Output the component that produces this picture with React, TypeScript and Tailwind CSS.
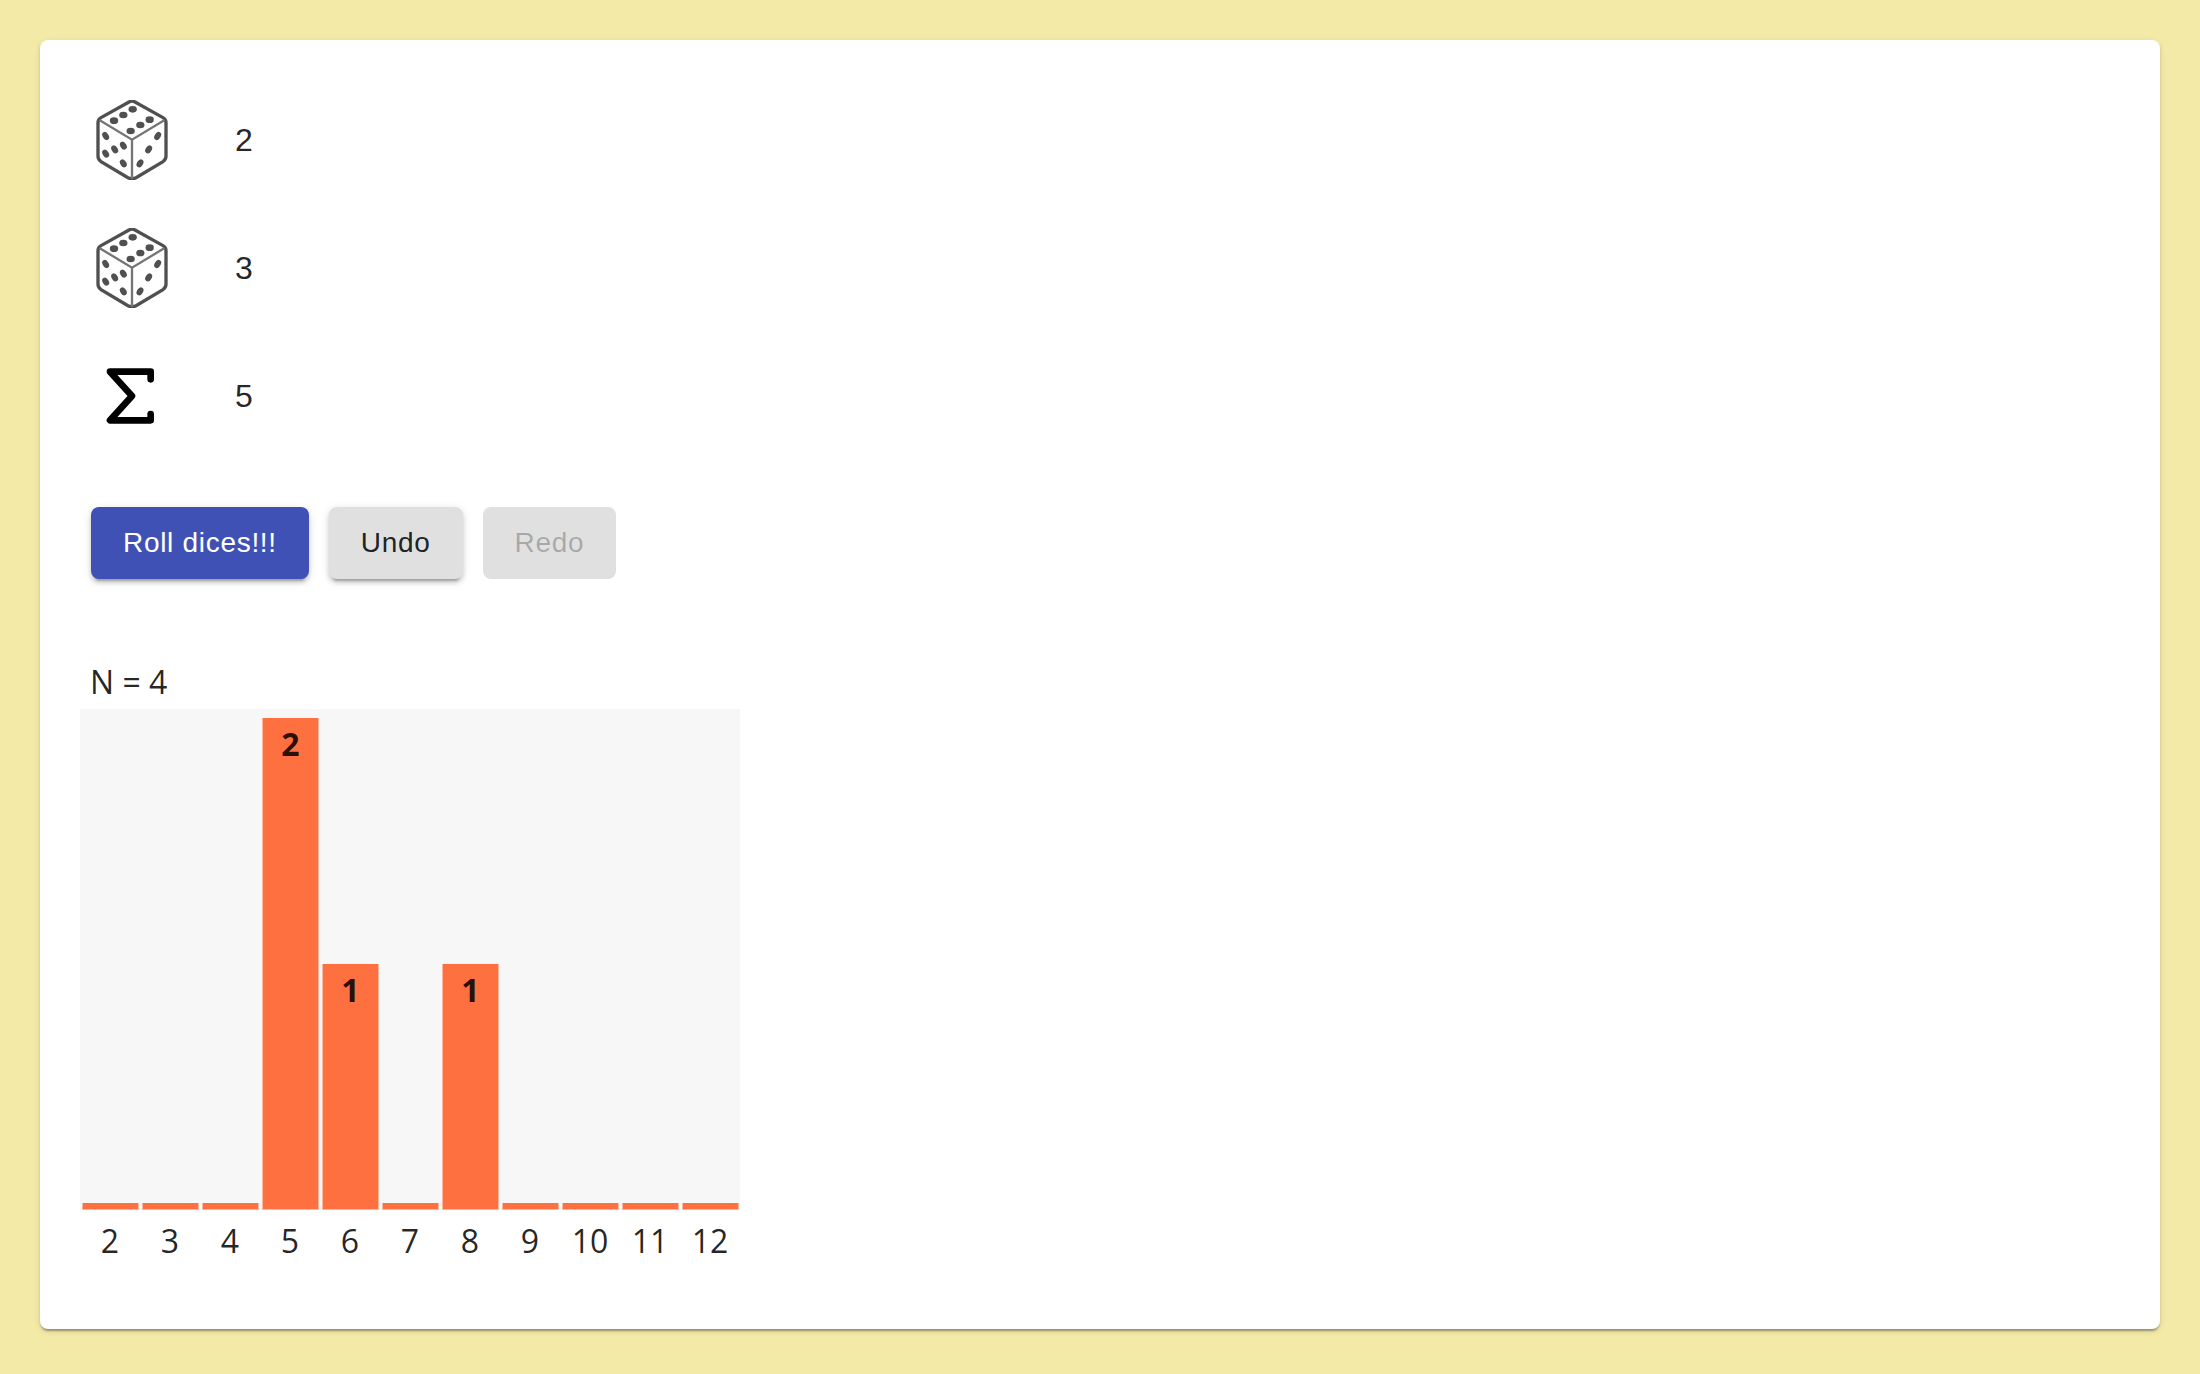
import type { ReactNode } from "react";

const COUNTS = [
  { sum: 2, count: 0 },
  { sum: 3, count: 0 },
  { sum: 4, count: 0 },
  { sum: 5, count: 2 },
  { sum: 6, count: 1 },
  { sum: 7, count: 0 },
  { sum: 8, count: 1 },
  { sum: 9, count: 0 },
  { sum: 10, count: 0 },
  { sum: 11, count: 0 },
  { sum: 12, count: 0 },
];

const MAX_BAR = 492;
const MIN_BAR = 6;

function Die() {
  const top = [[102, 106], [130, 89], [158, 72], [152, 137], [181, 119], [209, 103]];
  const left = [[77, 152], [77, 205], [104, 192], [130, 181], [130, 234]];
  const right = [[233, 152], [206, 192], [180, 234]];
  return (
    <svg viewBox="36 44 240 240" className="size-20" fill="none" stroke="#505050" aria-label="Die" role="img">
      <path
        d="M147 50Q156 45 165 50L249 97Q258 102 258 112V213Q258 223 249 229L168 277Q156 283 144 277L63 229Q54 223 54 213V112Q54 102 63 97Z"
        strokeWidth="10"
      />
      <path d="M58 104L156 163L254 104M156 163V280" strokeWidth="7" stroke="#757575" />
      <g fill="#505050" stroke="none">
        {top.map(([x, y]) => (
          <ellipse key={`${x}-${y}`} cx={x} cy={y} rx="12.5" ry="10" />
        ))}
        {left.map(([x, y]) => (
          <ellipse key={`${x}-${y}`} cx={x} cy={y} rx="9" ry="13" transform={`rotate(-32 ${x} ${y})`} />
        ))}
        {right.map(([x, y]) => (
          <ellipse key={`${x}-${y}`} cx={x} cy={y} rx="9" ry="13" transform={`rotate(32 ${x} ${y})`} />
        ))}
      </g>
    </svg>
  );
}

function Sigma() {
  return (
    <svg viewBox="36 18 240 240" className="size-20" fill="none" stroke="#000" aria-label="Sum" role="img">
      <path d="M212 88V65H90L156 138L90 211H212V192" strokeWidth="20" strokeLinecap="round" strokeLinejoin="round" />
    </svg>
  );
}

function Row({ icon, value }: { icon: ReactNode; value: number }) {
  return (
    <div className="flex h-32 items-center gap-[63px]">
      {icon}
      <span>{value}</span>
    </div>
  );
}

const RAISED = "shadow-[0_6px_2px_-4px_rgba(0,0,0,0.2),0_4px_4px_0_rgba(0,0,0,0.14),0_2px_10px_0_rgba(0,0,0,0.12)]";
const BUTTON = "h-[72px] rounded-lg px-8 text-[28px] tracking-wide";

export default function App() {
  return (
    <div className="min-h-screen bg-[#f3eaa8] p-10 pb-[45px] font-['Liberation_Sans',Arial,sans-serif] text-[32px] leading-10 text-black/87">
      <main className="rounded-lg bg-white px-10 pt-9 pb-[68px] shadow-[0_4px_2px_-2px_rgba(0,0,0,0.2),0_2px_2px_0_rgba(0,0,0,0.14),0_2px_6px_0_rgba(0,0,0,0.12)]">
        <section className="pl-3">
          <Row icon={<Die />} value={2} />
          <Row icon={<Die />} value={3} />
          <Row icon={<Sigma />} value={5} />
        </section>

        <div className="mt-[47px] flex gap-5 pl-[11px]">
          <button type="button" className={`${BUTTON} bg-[#3f51b5] text-white ${RAISED}`}>
            Roll dices!!!
          </button>
          <button type="button" className={`${BUTTON} bg-[#e0e0e0] ${RAISED}`}>
            Undo
          </button>
          <button type="button" disabled className={`${BUTTON} bg-[#e0e0e0] text-black/26`}>
            Redo
          </button>
        </div>

        <figure className="mt-[83px] w-[660px] font-['Open_Sans','Noto_Sans',sans-serif]">
          <figcaption className="mb-[7px] pl-2.5">N = 4</figcaption>
          <div className="grid h-[501px] grid-cols-11 items-end bg-[#f7f7f7]">
            {COUNTS.map(({ sum, count }) => (
              <div
                key={sum}
                className="mr-px ml-0.5 border border-t-0 border-[#ffb69f] bg-[#ff7040] pt-1.5 text-center font-bold"
                style={{ height: Math.max(MIN_BAR, (count / 2) * MAX_BAR) }}
              >
                {count > 0 && count}
              </div>
            ))}
          </div>
          <div className="mt-[11px] grid grid-cols-11 text-center">
            {COUNTS.map(({ sum }) => (
              <span key={sum}>{sum}</span>
            ))}
          </div>
        </figure>
      </main>
    </div>
  );
}
